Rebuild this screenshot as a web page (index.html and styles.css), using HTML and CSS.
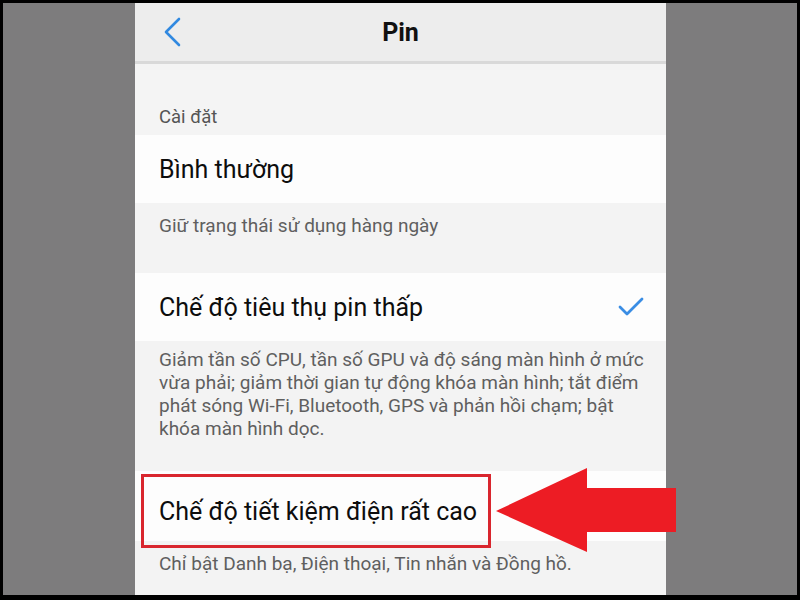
FILE: index.html
```html
<!DOCTYPE html>
<html lang="vi">
<head>
<meta charset="utf-8">
<title>Pin</title>
<link rel="stylesheet" href="styles.css">
</head>
<body>
<div class="frame">
  <div class="stage">
    <div class="side"></div>
    <div class="phone">
      <header class="topbar">
        <span class="back">
          <svg width="20" height="32" viewBox="0 0 20 32"><polyline points="18,3 5,16 18,29" fill="none" stroke="#3189e0" stroke-width="2.6" stroke-linecap="round" stroke-linejoin="round"/></svg>
        </span>
        <h1 class="title">Pin</h1>
        <span></span>
      </header>
      <div class="group-label">Cài đặt</div>
      <div class="option"><span class="option-name">Bình thường</span></div>
      <p class="option-desc">Giữ trạng thái sử dụng hàng ngày</p>
      <div class="option">
        <span class="option-name">Chế độ tiêu thụ pin thấp</span>
        <svg class="check" width="28" height="22" viewBox="0 0 28 22"><polyline points="3,11 10,18 25,3" fill="none" stroke="#3a8de4" stroke-width="2.8" stroke-linecap="round" stroke-linejoin="round"/></svg>
      </div>
      <p class="option-desc option-desc--long">Giảm tần số CPU, tần số GPU và độ sáng màn hình ở mức<br>vừa phải; giảm thời gian tự động khóa màn hình; tắt điểm<br>phát sóng Wi-Fi, Bluetooth, GPS và phản hồi chạm; bật<br>khóa màn hình dọc.</p>
      <div class="option option--highlight">
        <span class="option-name">Chế độ tiết kiệm điện rất cao</span>
        <span class="highlight-box"></span>
        <svg class="arrow" width="180" height="84" viewBox="0 0 180 84"><polygon points="0,43 91,0 91,20 180,20 180,64 91,64 91,84" fill="#ed1c24"/></svg>
      </div>
      <p class="option-desc option-desc--last">Chỉ bật Danh bạ, Điện thoại, Tin nhắn và Đồng hồ.</p>
    </div>
    <div class="side"></div>
  </div>
</div>
</body>
</html>
```
FILE: styles.css
```css
html, body {
  margin: 0;
  padding: 0;
  background: #000;
}

.frame {
  width: 800px;
  height: 600px;
  box-sizing: border-box;
  padding: 3px 3px 5px 3px;
  background: #000;
  font-family: Roboto, "Noto Sans", "DejaVu Sans", sans-serif;
}

.stage {
  display: grid;
  grid-template-columns: 132px 531px 131px;
  height: 592px;
  background: #7d7c7d;
}

.phone {
  position: relative;
  display: flex;
  flex-direction: column;
  background: #f4f4f4;
}

.topbar {
  height: 58px;
  display: grid;
  grid-template-columns: 1fr auto 1fr;
  align-items: center;
  background: #ededed;
  border-bottom: 3px solid #d9d9d9;
}

.back {
  display: flex;
  padding-left: 26px;
}

.title {
  margin: 0;
  font-size: 25px;
  font-weight: 700;
  color: #111;
}

.group-label {
  height: 71px;
  box-sizing: border-box;
  padding: 43px 24px 0;
  font-size: 18.5px;
  line-height: 20px;
  color: #555;
}

.option {
  position: relative;
  height: 68px;
  box-sizing: border-box;
  display: flex;
  align-items: center;
  justify-content: space-between;
  padding: 0 24px;
  background: #fdfdfd;
  font-size: 25px;
  color: #0d0d0d;
}

.check {
  margin-right: -3px;
}

.option-desc {
  margin: 0;
  height: 70px;
  box-sizing: border-box;
  padding: 11px 24px 0;
  font-size: 19px;
  line-height: 23px;
  color: #5f5f5f;
  background: #f3f3f3;
  white-space: nowrap;
}

.option-desc--long {
  height: 130px;
  padding-top: 7px;
}

.option-desc--last {
  height: auto;
  flex: 1;
}

.option--highlight {
  height: 70px;
  padding-top: 11px;
}

.highlight-box {
  position: absolute;
  left: 6px;
  top: 3px;
  width: 350px;
  height: 74px;
  box-sizing: border-box;
  border: 3px solid #d9262e;
}

.arrow {
  position: absolute;
  left: 361px;
  top: -3px;
}
```
